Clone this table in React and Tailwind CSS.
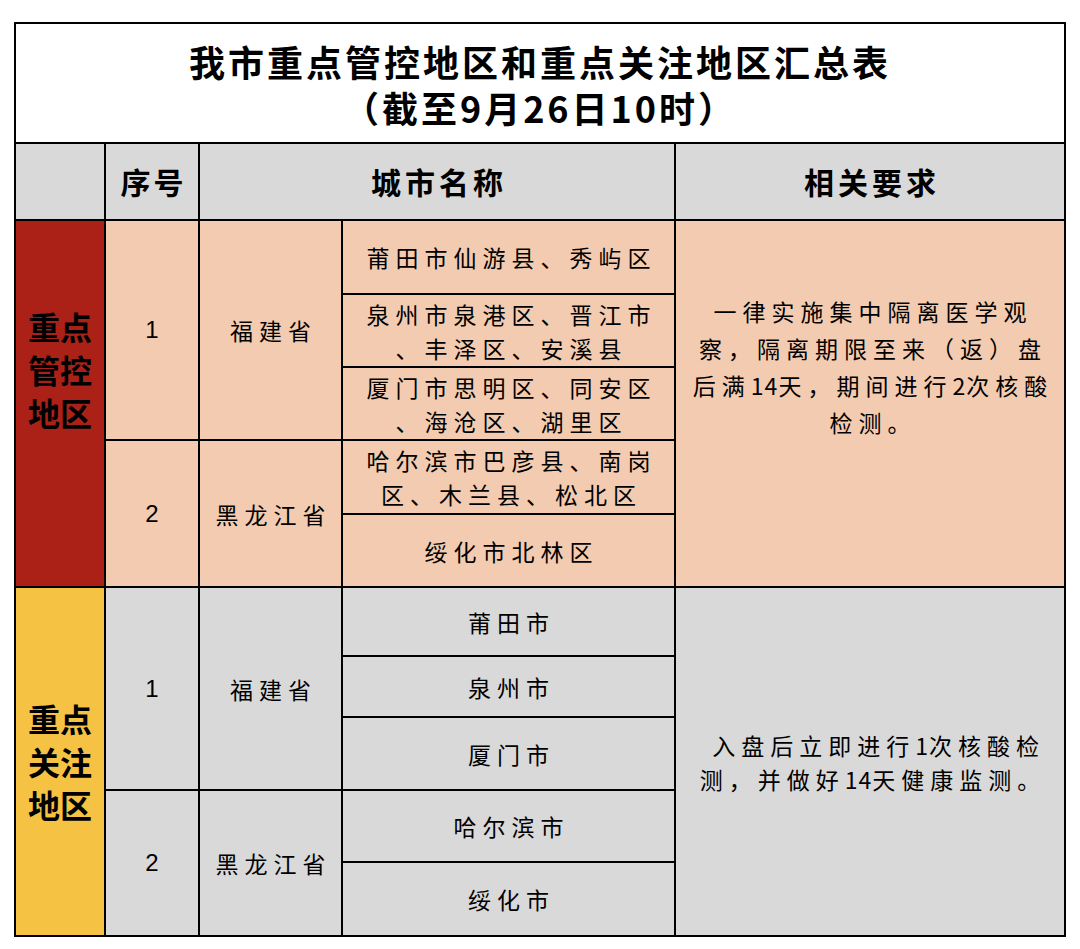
import React from 'react';

const cjk = { fontFamily: '"Noto Sans CJK SC", "Noto Sans", sans-serif' };

const Cell = ({ className = '', children }) => (
	<div className={`flex items-center justify-center text-center text-black ${className}`}>{children}</div>
);

const Body = ({ children }) => (
	<div className='text-[23px] leading-[34px] tracking-[6px] pl-[6px]'>{children}</div>
);

const Num = ({ children }) => (
	<span className='text-[24px]' style={{ fontFamily: '"Liberation Sans", Arial, sans-serif' }}>{children}</span>
);

// digits inside the long sentences sit tighter than the CJK characters
const D = ({ children }) => (
	<span className='tracking-[1px]'>{children}</span>
);

const App = () => {
	return (
		<div className='min-h-screen bg-white pt-[22px] pl-[14px]' style={cjk}>
			<div className='grid w-fit gap-[2px] bg-black p-[2px] grid-cols-[88px_92px_141px_331px_388px] grid-rows-[118px_75px_72px_71px_71px_72px_71px_67px_59px_71px_70px_72px]'>

				{/* title */}
				<Cell className='col-span-5 row-start-1 bg-white flex-col font-bold text-[36px] tracking-[3px] pt-[2px]'>
					<div className='leading-[46px]'>我市重点管控地区和重点关注地区汇总表</div>
					<div className='leading-[46px]'>（截至9月26日10时）</div>
				</Cell>

				{/* header */}
				<Cell className='col-start-1 row-start-2 bg-[#d9d9d9]'></Cell>
				<Cell className='col-start-2 row-start-2 bg-[#d9d9d9] font-bold text-[30px] tracking-[3px] pl-[3px]'>序号</Cell>
				<Cell className='col-start-3 col-span-2 row-start-2 bg-[#d9d9d9] font-bold text-[30px] tracking-[4px] pl-[4px]'>城市名称</Cell>
				<Cell className='col-start-5 row-start-2 bg-[#d9d9d9] font-bold text-[30px] tracking-[4px] pl-[4px]'>相关要求</Cell>

				{/* 重点管控地区 */}
				<Cell className='col-start-1 row-start-3 row-span-5 bg-[#ab2118] font-bold text-[32px] leading-[43px] pb-[68px]'>
					<div>重点<br />管控<br />地区</div>
				</Cell>
				<Cell className='col-start-2 row-start-3 row-span-3 bg-[#f2cbb0]'><Num>1</Num></Cell>
				<Cell className='col-start-3 row-start-3 row-span-3 bg-[#f2cbb0]'><Body>福建省</Body></Cell>
				<Cell className='col-start-4 row-start-3 bg-[#f2cbb0]'><Body>莆田市仙游县、秀屿区</Body></Cell>
				<Cell className='col-start-4 row-start-4 bg-[#f2cbb0]'><Body>泉州市泉港区、晋江市<br />、丰泽区、安溪县</Body></Cell>
				<Cell className='col-start-4 row-start-5 bg-[#f2cbb0]'><Body>厦门市思明区、同安区<br />、海沧区、湖里区</Body></Cell>
				<Cell className='col-start-2 row-start-6 row-span-2 bg-[#f2cbb0]'><Num>2</Num></Cell>
				<Cell className='col-start-3 row-start-6 row-span-2 bg-[#f2cbb0]'><Body>黑龙江省</Body></Cell>
				<Cell className='col-start-4 row-start-6 bg-[#f2cbb0]'><Body>哈尔滨市巴彦县、南岗<br />区、木兰县、松北区</Body></Cell>
				<Cell className='col-start-4 row-start-7 bg-[#f2cbb0]'><Body>绥化市北林区</Body></Cell>
				<Cell className='col-start-5 row-start-3 row-span-5 bg-[#f2cbb0] pb-[74px]'>
					<div className='text-[23px] leading-[37px] tracking-[6px] pl-[6px]'>
						一律实施集中隔离医学观<br />察，隔离期限至来（返）盘<br />后满<D>14</D>天，期间进行<D>2</D>次核酸<br />检测。
					</div>
				</Cell>

				{/* 重点关注地区 */}
				<Cell className='col-start-1 row-start-8 row-span-5 bg-[#f5c243] font-bold text-[32px] leading-[43px]'>
					<div>重点<br />关注<br />地区</div>
				</Cell>
				<Cell className='col-start-2 row-start-8 row-span-3 bg-[#d9d9d9]'><Num>1</Num></Cell>
				<Cell className='col-start-3 row-start-8 row-span-3 bg-[#d9d9d9]'><Body>福建省</Body></Cell>
				<Cell className='col-start-4 row-start-8 bg-[#d9d9d9]'><Body>莆田市</Body></Cell>
				<Cell className='col-start-4 row-start-9 bg-[#d9d9d9]'><Body>泉州市</Body></Cell>
				<Cell className='col-start-4 row-start-10 bg-[#d9d9d9]'><Body>厦门市</Body></Cell>
				<Cell className='col-start-2 row-start-11 row-span-2 bg-[#d9d9d9]'><Num>2</Num></Cell>
				<Cell className='col-start-3 row-start-11 row-span-2 bg-[#d9d9d9]'><Body>黑龙江省</Body></Cell>
				<Cell className='col-start-4 row-start-11 bg-[#d9d9d9]'><Body>哈尔滨市</Body></Cell>
				<Cell className='col-start-4 row-start-12 bg-[#d9d9d9]'><Body>绥化市</Body></Cell>
				<Cell className='col-start-5 row-start-8 row-span-5 bg-[#d9d9d9]'>
					<div className='text-[23px] leading-[34px] tracking-[6px] pl-[6px]'>
						&nbsp;入盘后立即进行<D>1</D>次核酸检<br />测，并做好<D>14</D>天健康监测。
					</div>
				</Cell>
			</div>
		</div>
	);
}

export default App;
